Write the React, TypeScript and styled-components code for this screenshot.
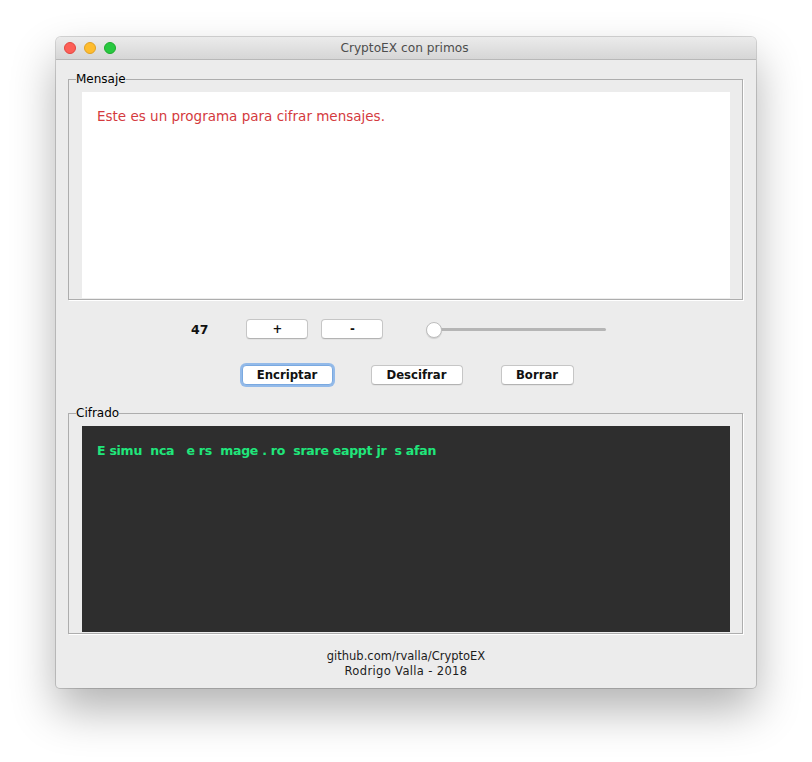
import styled, { createGlobalStyle } from "styled-components";

const GlobalStyle = createGlobalStyle`
  html, body {
    margin: 0;
    padding: 0;
    background: #ffffff;
  }
  body {
    font-family: "DejaVu Sans", "Liberation Sans", sans-serif;
    color: #111;
  }
`;

const Page = styled.div`
  width: 812px;
  height: 762px;
  box-sizing: border-box;
  padding: 37px 56px 0;
`;

const Window = styled.div`
  width: 700px;
  border-radius: 5px 5px 4px 4px;
  overflow: hidden;
  background: #ececec;
  box-shadow: 0 0 0 1px rgba(0, 0, 0, 0.16), 0 22px 45px rgba(0, 0, 0, 0.3);
`;

const TitleBar = styled.div`
  height: 22px;
  display: grid;
  grid-template-columns: 1fr auto 1fr;
  align-items: center;
  background: linear-gradient(#ebebeb, #d6d6d6);
  border-bottom: 1px solid #b8b8b8;
`;

const Lights = styled.div`
  display: flex;
  gap: 8px;
  padding-left: 8px;
`;

const Light = styled.span<{ $fill: string; $edge: string }>`
  width: 12px;
  height: 12px;
  box-sizing: border-box;
  border-radius: 50%;
  background: ${({ $fill }) => $fill};
  border: 0.5px solid ${({ $edge }) => $edge};
`;

const Title = styled.div`
  font-size: 12.2px;
  color: #4d4d4d;
  line-height: 22px;
  margin-right: 3px;
`;

const Content = styled.div`
  display: flex;
  flex-direction: column;
  padding: 12px 0 10px;
`;

const Group = styled.fieldset`
  margin: 0 13px 0 12px;
  padding: 5px 12px 1px 13px;
  border: 1px solid #adadad;
  box-shadow: 1px 1px 0 #ffffff;
  min-width: 0;
`;

const GroupLabel = styled.legend`
  padding: 0;
  margin-left: -6px;
  font-size: 12px;
  line-height: 15px;
  color: #000;
`;

const TextPane = styled.div<{ $dark?: boolean }>`
  height: 206px;
  box-sizing: border-box;
  padding: ${({ $dark }) => ($dark ? "17px 15px" : "16px 15px")};
  background: ${({ $dark }) => ($dark ? "#2e2e2e" : "#ffffff")};
  color: ${({ $dark }) => ($dark ? "#20e67b" : "#d43a3e")};
  font-size: ${({ $dark }) => ($dark ? "12.5px" : "13.5px")};
  font-weight: ${({ $dark }) => ($dark ? "bold" : "normal")};
  letter-spacing: ${({ $dark }) => ($dark ? "-0.25px" : "0")};
  white-space: pre;
`;

const Controls = styled.div`
  display: flex;
  align-items: center;
  gap: 13px;
  height: 20px;
  margin-top: 19px;
  padding-left: 135px;
`;

const Value = styled.span`
  font-size: 12.5px;
  font-weight: bold;
  margin-right: 25px;
`;

const Button = styled.button<{ $width: number; $focused?: boolean }>`
  width: ${({ $width }) => $width}px;
  height: 20px;
  padding: 0;
  box-sizing: border-box;
  background: #ffffff;
  border: 1px solid ${({ $focused }) => ($focused ? "#7aa9e0" : "#c6c6c6")};
  border-bottom-color: ${({ $focused }) => ($focused ? "#7aa9e0" : "#b3b3b3")};
  border-radius: 4px;
  box-shadow: ${({ $focused }) =>
    $focused ? "0 0 0 2px rgba(118, 170, 232, 0.75)" : "0 1px 0 rgba(0, 0, 0, 0.04)"};
  font-family: inherit;
  font-size: 11.7px;
  font-weight: bold;
  color: #111;
`;

const Slider = styled.div`
  position: relative;
  width: 180px;
  height: 20px;
  margin-left: 30px;
`;

const Track = styled.div`
  position: absolute;
  left: 8px;
  right: 0;
  top: 9px;
  height: 3px;
  border-radius: 2px;
  background: #b5b5b5;
`;

const Thumb = styled.div`
  position: absolute;
  left: 0;
  top: 3px;
  width: 16px;
  height: 16px;
  box-sizing: border-box;
  border-radius: 50%;
  background: #ffffff;
  border: 1px solid #bdbdbd;
  box-shadow: 0 1px 1px rgba(0, 0, 0, 0.12);
`;

const Actions = styled.div`
  display: flex;
  justify-content: center;
  gap: 38px;
  margin-top: 26px;
  margin-bottom: 21px;
  padding-left: 3px;
`;

const Footer = styled.div`
  margin-top: 15px;
  margin-bottom: -1px;
  text-align: center;
  font-size: 11.5px;
  line-height: 15px;
  color: #1c1c1c;
`;

const Credit = styled.span`
  letter-spacing: 0.35px;
`;

export default function App() {
  return (
    <Page>
      <GlobalStyle />
      <Window>
        <TitleBar>
          <Lights>
            <Light $fill="#fd5f57" $edge="#e2463f" />
            <Light $fill="#febc2e" $edge="#dfa125" />
            <Light $fill="#28c840" $edge="#1dab2c" />
          </Lights>
          <Title>CryptoEX con primos</Title>
          <span />
        </TitleBar>
        <Content>
          <Group>
            <GroupLabel>Mensaje</GroupLabel>
            <TextPane>Este es un programa para cifrar mensajes.</TextPane>
          </Group>
          <Controls>
            <Value>47</Value>
            <Button $width={62}>+</Button>
            <Button $width={62}>-</Button>
            <Slider>
              <Track />
              <Thumb />
            </Slider>
          </Controls>
          <Actions>
            <Button $width={91} $focused>
              Encriptar
            </Button>
            <Button $width={92}>Descifrar</Button>
            <Button $width={73}>Borrar</Button>
          </Actions>
          <Group>
            <GroupLabel>Cifrado</GroupLabel>
            <TextPane $dark>{"E simu  nca   e rs  mage . ro  srare eappt jr  s afan"}</TextPane>
          </Group>
          <Footer>
            github.com/rvalla/CryptoEX
            <br />
            <Credit>Rodrigo Valla - 2018</Credit>
          </Footer>
        </Content>
      </Window>
    </Page>
  );
}
